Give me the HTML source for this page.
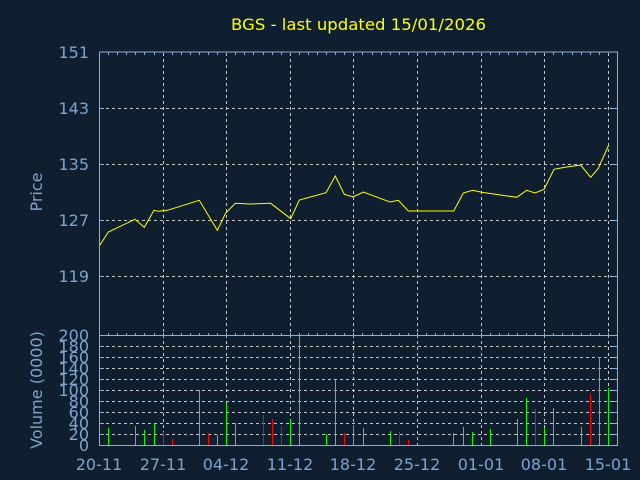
<!DOCTYPE html>
<html><head><style>html,body{margin:0;padding:0;background:#0f1f2f;}svg{display:block}</style></head>
<body>
<svg width="640" height="480" xmlns="http://www.w3.org/2000/svg" font-family="DejaVu Sans, sans-serif">
<rect width="640" height="480" fill="#0f1f2f"/>
<text x="231" y="30" fill="#ffff00" font-size="16" textLength="255" lengthAdjust="spacingAndGlyphs">BGS - last updated 15/01/2026</text>
<g stroke="#c8c8c8" stroke-width="1" stroke-dasharray="3,3" fill="none">
<path d="M163.5 53V445M226.5 53V445M290.5 53V445M353.5 53V445M417.5 53V445M481.5 53V445M544.5 53V445M608.5 53V445"/>
<path d="M100 108.5H617M100 164.5H617M100 220.5H617M100 276.5H617"/>
<path d="M100 346.5H617M100 357.5H617M100 368.5H617M100 379.5H617M100 390.5H617M100 401.5H617M100 412.5H617M100 423.5H617M100 434.5H617"/>
</g>
<g stroke="#8fb0d8" stroke-width="1" fill="none">
<path d="M99.5 52V445.5H617.5V52H99.5M99.5 335.5H617.5"/>
<path id="tk" d="M108.5 52v3M117.5 52v3M126.5 52v3M135.5 52v3M144.5 52v3M154.5 52v3M172.5 52v3M181.5 52v3M190.5 52v3M199.5 52v3M208.5 52v3M217.5 52v3M235.5 52v3M244.5 52v3M253.5 52v3M263.5 52v3M272.5 52v3M281.5 52v3M299.5 52v3M308.5 52v3M317.5 52v3M326.5 52v3M335.5 52v3M344.5 52v3M362.5 52v3M372.5 52v3M381.5 52v3M390.5 52v3M399.5 52v3M408.5 52v3M426.5 52v3M435.5 52v3M444.5 52v3M453.5 52v3M463.5 52v3M472.5 52v3M490.5 52v3M499.5 52v3M508.5 52v3M517.5 52v3M526.5 52v3M535.5 52v3M553.5 52v3M562.5 52v3M572.5 52v3M581.5 52v3M590.5 52v3M599.5 52v3"/>
<use href="#tk" y="281"/>
<path d="M163.5 333v5M226.5 333v5M290.5 333v5M353.5 333v5M417.5 333v5M481.5 333v5M544.5 333v5M608.5 333v5"/>
<path d="M99 108.5h5M99 164.5h5M99 220.5h5M99 276.5h5M612 108.5h5M612 164.5h5M612 220.5h5M612 276.5h5"/>
<path d="M99 346.5h5M99 357.5h5M99 368.5h5M99 379.5h5M99 390.5h5M99 401.5h5M99 412.5h5M99 423.5h5M99 434.5h5M612 346.5h5M612 357.5h5M612 368.5h5M612 379.5h5M612 390.5h5M612 401.5h5M612 412.5h5M612 423.5h5M612 434.5h5"/>
</g>
<g fill="#7fa3cf" font-size="16" text-anchor="end">
<text x="89" y="58">151</text><text x="89" y="114">143</text><text x="89" y="170">135</text><text x="89" y="226">127</text><text x="89" y="282">119</text>
<text x="89" y="341">200</text><text x="89" y="352">180</text><text x="89" y="363">160</text><text x="89" y="374">140</text><text x="89" y="385">120</text><text x="89" y="396">100</text><text x="89" y="407">80</text><text x="89" y="418">60</text><text x="89" y="429">40</text><text x="89" y="440">20</text><text x="89" y="451">0</text>
</g>
<g fill="#7fa3cf" font-size="16" text-anchor="middle">
<text x="99" y="470">20-11</text><text x="163" y="470">27-11</text><text x="226" y="470">04-12</text><text x="290" y="470">11-12</text><text x="353" y="470">18-12</text><text x="417" y="470">25-12</text><text x="481" y="470">01-01</text><text x="544" y="470">08-01</text><text x="608" y="470">15-01</text>
<text transform="translate(42,192) rotate(-90)">Price</text>
<text transform="translate(42,390) rotate(-90)">Volume (0000)</text>
</g>
<g stroke-width="1" fill="none">
<path stroke="#00ff00" d="M108.5 428V445M135.5 426V445M144.5 430V445M154.5 424V445M199.5 390V445M217.5 435V445M226.5 404V445M235.5 423V445M290.5 420V445M299.5 335V445M326.5 434V445M335.5 380V445M353.5 425V445M363.5 428V445M390.5 431V445M453.5 433V445M463.5 427V445M472.5 432V445M490.5 429V445M517.5 419V445M526.5 398V445M544.5 428V445M553.5 408V445M581.5 427V445M599.5 357V445M608.5 388V445"/>
<path stroke="#ff0000" d="M163.5 432V445M172.5 439V445M208.5 433V445M263.5 415V445M272.5 419V445M281.5 426V445M344.5 433V445M399.5 432V445M408.5 440V445M535.5 409V445M590.5 393V445"/>
</g>
<polyline fill="none" stroke="#ffff00" stroke-width="1" points="100,245 108.3,232 135,219.3 144.3,227.3 154,210.3 158.3,211.3 167.3,210.3 199.3,200.3 217.3,230.3 225.7,213 235.3,203.3 249.3,204 270.7,203.3 290.7,218.7 299.3,200 326,192.7 335.3,176 344.3,194.3 352.7,196.7 355,196 363.3,192 390,202 398.3,200.3 408.3,211 453.7,211 463.3,193 472.7,190.3 481.7,192.3 516.7,197.3 526.7,190.3 535,193 544,189.3 554,169.3 565,167.3 580.7,165 590.7,177.3 598.3,168.3 608.3,146"/>
</svg>
</body></html>
